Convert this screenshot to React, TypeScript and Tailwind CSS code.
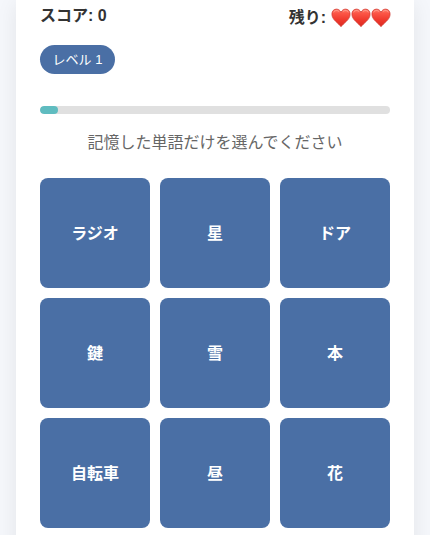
const MAX_LIVES = 3;

const words = ["ラジオ", "星", "ドア", "鍵", "雪", "本", "自転車", "昼", "花"];

function Heart({ id }: { id: string }) {
  return (
    <svg width="20" height="20" viewBox="0 0 20 20" aria-hidden="true" className="shrink-0">
      <defs>
        <linearGradient id={id} x1="0" y1="0" x2="0" y2="1">
          <stop offset="0" stopColor="#ff7d6c" />
          <stop offset="0.25" stopColor="#fb5546" />
          <stop offset="0.6" stopColor="#f03a2e" />
          <stop offset="1" stopColor="#dc2a20" />
        </linearGradient>
      </defs>
      <path
        d="M10 18.7C8.8 17.2 6.7 15.3 4.5 13.2C2.3 11.1 0.9 8.9 0.9 6.1C0.9 3.2 2.8 1.1 5.4 1.1C7.5 1.1 9.2 2.4 10 4.3C10.8 2.4 12.5 1.1 14.6 1.1C17.2 1.1 19.1 3.2 19.1 6.1C19.1 8.9 17.7 11.1 15.5 13.2C13.3 15.3 11.2 17.2 10 18.7Z"
        fill={`url(#${id})`}
        stroke="#cf3a32"
        strokeWidth="0.7"
      />
      <path d="M2.7 4.3C3.4 2.4 6.4 1.8 8 3.7M12 3.7C13.6 1.8 16.6 2.4 17.3 4.3" fill="none" stroke="#ffb5a8" strokeWidth="0.9" opacity="0.7" />
    </svg>
  );
}

function StatusBar({ score, lives }: { score: number; lives: number }) {
  return (
    <div className="flex h-[30px] items-center justify-between text-base font-bold leading-[30px]">
      <span className="pt-0.5">スコア: {score}</span>
      <div className="-mr-px flex items-center">
        <span className="mr-[5px] pt-[5px]">残り:</span>
        <div className="flex pt-[5px]">
          {Array.from({ length: lives }, (_, i) => <Heart key={i} id={`heart-${i}`} />)}
        </div>
      </div>
    </div>
  );
}

function ProgressBar({ pct }: { pct: number }) {
  return (
    <div className="mt-8 h-2 overflow-hidden rounded-full bg-[#e0e0e0]">
      <div className="h-2 rounded-full bg-[#5fbcc0]" style={{ width: `${pct}%` }} />
    </div>
  );
}

export default function App() {
  return (
    <div className="h-[535px] overflow-hidden bg-[#f5f7fb] px-4 font-['Liberation_Sans','Noto_Sans_CJK_JP',sans-serif] text-[#333]">
      <main className="h-[600px] bg-white px-6 shadow-[0_4px_20px_rgba(0,0,0,0.08)]">
        <StatusBar score={0} lives={MAX_LIVES} />
        <div className="mt-[15px] flex h-[29px] w-[75px] items-center justify-center rounded-full bg-[#4a6fa5] text-[13px] text-white">
          レベル 1
        </div>
        <ProgressBar pct={5.14} />
        <p className="mt-4 h-6 pt-px text-center text-base leading-6 text-[#666]">記憶した単語だけを選んでください</p>
        <div className="mt-6 grid grid-cols-3 gap-2.5">
          {words.map((word) => (
            <button key={word} className="flex h-[110px] items-center justify-center rounded-lg bg-[#4a6fa5] pt-0.5 text-base font-bold text-white">
              {word}
            </button>
          ))}
        </div>
      </main>
    </div>
  );
}
